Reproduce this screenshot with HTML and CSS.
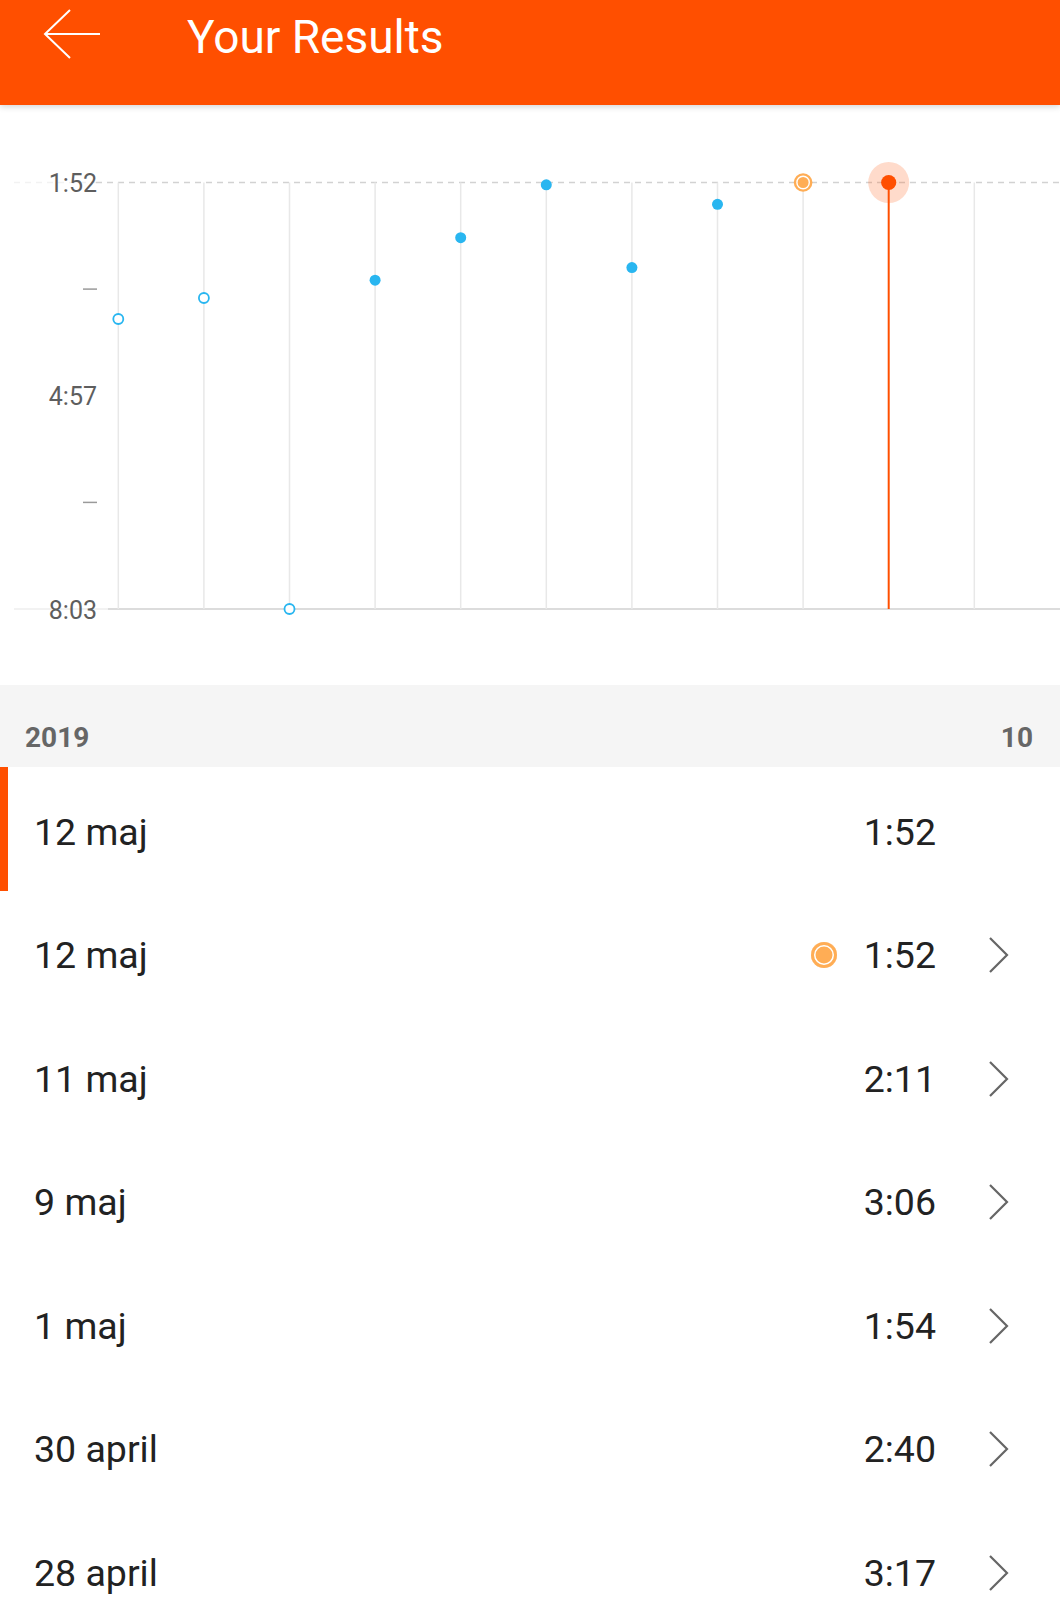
FILE: index.html
```html
<!DOCTYPE html>
<html lang="en">

<head>
    <meta charset="UTF-8">
    <meta name="viewport" content="width=device-width, initial-scale=1.0">
    <title>Your Results</title>
    <link rel="stylesheet" href="styles.css">
</head>

<body>
    <header class="topbar">
        <button class="back-btn" aria-label="Back">
            <svg width="58" height="50" viewBox="0 0 58 50">
                <path d="M2 25 H57 M27 1 L2 25 L27 49" fill="none" stroke="#fff" stroke-width="2" />
            </svg>
        </button>
        <h1 class="title">Your Results</h1>
    </header>

    <section class="chart">
        <svg class="chart-svg" width="1060" height="580" viewBox="0 0 1060 580">
            <!-- best time guide + axis -->
            <line x1="14" y1="77.5" x2="96" y2="77.5" class="guide faint" />
            <line x1="96" y1="77.5" x2="1060" y2="77.5" class="guide" />
            <line x1="14" y1="504" x2="108" y2="504" class="axis faint" />
            <line x1="108" y1="504" x2="1060" y2="504" class="axis" />

            <!-- one column per result -->
            <g class="cols">
                <line x1="118.3" y1="77.5" x2="118.3" y2="504" />
                <line x1="203.9" y1="77.5" x2="203.9" y2="504" />
                <line x1="289.5" y1="77.5" x2="289.5" y2="504" />
                <line x1="375.1" y1="77.5" x2="375.1" y2="504" />
                <line x1="460.7" y1="77.5" x2="460.7" y2="504" />
                <line x1="546.3" y1="77.5" x2="546.3" y2="504" />
                <line x1="631.9" y1="77.5" x2="631.9" y2="504" />
                <line x1="717.5" y1="77.5" x2="717.5" y2="504" />
                <line x1="803.1" y1="77.5" x2="803.1" y2="504" />
                <line x1="974.3" y1="77.5" x2="974.3" y2="504" />
            </g>
            <line x1="888.7" y1="77.5" x2="888.7" y2="504" class="cursor" />

            <!-- y labels -->
            <text x="97" y="78.5" class="ylabel">1:52</text>
            <text x="97" y="291.8" class="ylabel">4:57</text>
            <text x="97" y="505" class="ylabel">8:03</text>
            <line x1="83" y1="184.1" x2="97" y2="184.1" class="tick" />
            <line x1="83" y1="397.4" x2="97" y2="397.4" class="tick" />

            <!-- points -->
            <circle cx="118.3" cy="214" r="5" class="pt-open" />
            <circle cx="203.9" cy="193" r="5" class="pt-open" />
            <circle cx="289.5" cy="504" r="5" class="pt-open" />
            <circle cx="375.1" cy="175.2" r="5.5" class="pt" />
            <circle cx="460.7" cy="132.7" r="5.5" class="pt" />
            <circle cx="546.3" cy="79.8" r="5.5" class="pt" />
            <circle cx="631.9" cy="162.6" r="5.5" class="pt" />
            <circle cx="717.5" cy="99.3" r="5.5" class="pt" />

            <circle cx="803.1" cy="77.5" r="9.3" class="pt-best" />
            <circle cx="803.1" cy="77.5" r="6.2" class="pt-best-ring" />

            <circle cx="888.7" cy="77.5" r="20.5" class="pt-halo" />
            <circle cx="888.7" cy="77.5" r="7.6" class="pt-current" />
        </svg>
    </section>

    <div class="year-bar">
        <span>2019</span>
        <span>10</span>
    </div>

    <ul class="results">
        <li class="result selected">
            <span class="date">12 maj</span>
            <span class="badge empty"></span>
            <span class="time">1:52</span>
            <span class="chev hidden"></span>
        </li>
        <li class="result">
            <span class="date">12 maj</span>
            <span class="badge"></span>
            <span class="time">1:52</span>
            <svg class="chev" width="20" height="36" viewBox="0 0 20 36"><polyline points="1,1 18,18 1,35" /></svg>
        </li>
        <li class="result">
            <span class="date">11 maj</span>
            <span class="badge empty"></span>
            <span class="time">2:11</span>
            <svg class="chev" width="20" height="36" viewBox="0 0 20 36"><polyline points="1,1 18,18 1,35" /></svg>
        </li>
        <li class="result">
            <span class="date">9 maj</span>
            <span class="badge empty"></span>
            <span class="time">3:06</span>
            <svg class="chev" width="20" height="36" viewBox="0 0 20 36"><polyline points="1,1 18,18 1,35" /></svg>
        </li>
        <li class="result">
            <span class="date">1 maj</span>
            <span class="badge empty"></span>
            <span class="time">1:54</span>
            <svg class="chev" width="20" height="36" viewBox="0 0 20 36"><polyline points="1,1 18,18 1,35" /></svg>
        </li>
        <li class="result">
            <span class="date">30 april</span>
            <span class="badge empty"></span>
            <span class="time">2:40</span>
            <svg class="chev" width="20" height="36" viewBox="0 0 20 36"><polyline points="1,1 18,18 1,35" /></svg>
        </li>
        <li class="result">
            <span class="date">28 april</span>
            <span class="badge empty"></span>
            <span class="time">3:17</span>
            <svg class="chev" width="20" height="36" viewBox="0 0 20 36"><polyline points="1,1 18,18 1,35" /></svg>
        </li>
    </ul>
</body>

</html>
```

FILE: styles.css
```css
body {
    font-family: Roboto, "Liberation Sans", sans-serif;
    background-color: #ffffff;
    margin: 0;
    color: #222222;
}

.topbar {
    position: relative;
    z-index: 1;
    display: flex;
    align-items: flex-start;
    height: 105px;
    box-sizing: border-box;
    padding-top: 9px;
    background-color: #ff4f00;
    box-shadow: 0 2px 6px rgba(0, 0, 0, 0.16);
}

.back-btn {
    margin: 0 0 0 43px;
    padding: 0;
    border: none;
    background: none;
    width: 58px;
    height: 50px;
}

.back-btn svg {
    display: block;
}

.title {
    margin: 1px 0 0 86px;
    font-size: 46px;
    font-weight: 400;
    line-height: 54px;
    color: #ffffff;
}

.chart {
    height: 580px;
}

.chart-svg {
    display: block;
}

.guide {
    stroke: #d2d2d2;
    stroke-width: 1.5;
    stroke-dasharray: 6 5;
}

.axis {
    stroke: #dcdcdc;
    stroke-width: 2;
}

.faint {
    stroke: #f2f2f2;
}

.cols line {
    stroke: #e8e8e8;
    stroke-width: 1.5;
}

.cursor {
    stroke: #ff4f00;
    stroke-width: 2;
}

.ylabel {
    font-family: Roboto, "Liberation Sans", sans-serif;
    font-size: 25px;
    fill: #5e5e5e;
    text-anchor: end;
    dominant-baseline: central;
}

.tick {
    stroke: #9a9a9a;
    stroke-width: 1.5;
}

.pt {
    fill: #29b6f0;
}

.pt-open {
    fill: #ffffff;
    stroke: #29b6f0;
    stroke-width: 1.8;
}

.pt-best {
    fill: #ffad55;
}

.pt-best-ring {
    fill: none;
    stroke: #ffffff;
    stroke-width: 1.4;
}

.pt-halo {
    fill: rgba(255, 90, 20, 0.22);
}

.pt-current {
    fill: #ff4f00;
}

.year-bar {
    display: flex;
    justify-content: space-between;
    height: 82px;
    box-sizing: border-box;
    padding: 36px 27px 0 25px;
    background-color: #f5f5f5;
    font-size: 28px;
    font-weight: 700;
    line-height: 33px;
    color: #666666;
}

.results {
    list-style: none;
    margin: 0;
    padding: 0;
}

.result {
    display: flex;
    align-items: center;
    height: 123.5px;
    box-sizing: border-box;
    padding: 6px 51px 0 34px;
    font-size: 37.5px;
}

.result.selected {
    box-shadow: inset 8px 0 0 #ff4f00;
}

.date {
    flex: 1;
}

.badge {
    width: 26px;
    height: 26px;
    margin-right: 19px;
    border-radius: 50%;
    background-color: #ffad55;
    box-shadow: inset 0 0 0 3px #ffad55, inset 0 0 0 4.5px #ffffff;
}

.badge.empty {
    visibility: hidden;
}

.time {
    width: 80px;
    text-align: right;
}

.chev {
    width: 20px;
    height: 36px;
    margin-left: 53px;
    fill: none;
    stroke: #666666;
    stroke-width: 2.2;
}

.chev.hidden {
    visibility: hidden;
}
```
